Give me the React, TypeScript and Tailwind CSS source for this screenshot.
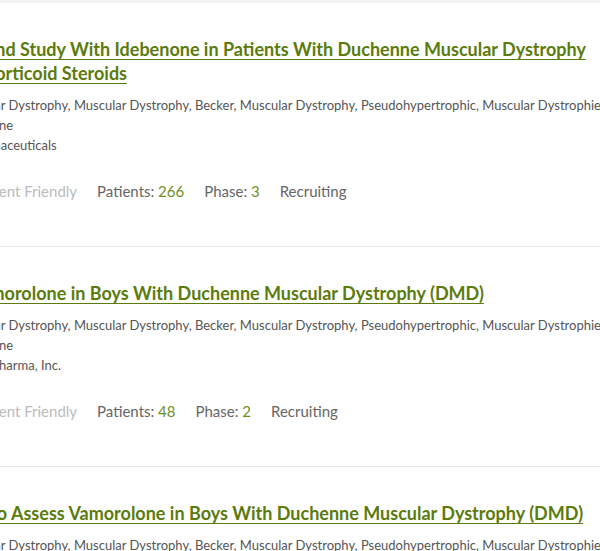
interface Trial {
  title: string;
  conditions: string;
  sponsor: string;
  patients: number;
  phase: number;
  status: string;
}

const conditions =
  "Condition: Duchenne Muscular Dystrophy, Muscular Dystrophy, Becker, Muscular Dystrophy, Pseudohypertrophic, Muscular Dystrophies, Muscular Dystrophy - Duchenne";

const trials: Trial[] = [
  {
    title:
      "A Phase III Double-blind Study With Idebenone in Patients With Duchenne Muscular Dystrophy (DMD), Taking Glucocorticoid Steroids",
    conditions,
    sponsor: "Lead sponsor: Santhera Pharmaceuticals",
    patients: 266,
    phase: 3,
    status: "Recruiting",
  },
  {
    title:
      "Phase 2b Study of Vamorolone in Boys With Duchenne Muscular Dystrophy (DMD)",
    conditions,
    sponsor: "Lead sponsor: Reveragen Biopharma, Inc.",
    patients: 48,
    phase: 2,
    status: "Recruiting",
  },
  {
    title:
      "The Extension Study to Assess Vamorolone in Boys With Duchenne Muscular Dystrophy (DMD)",
    conditions,
    sponsor: "Lead sponsor: Reveragen Biopharma, Inc.",
    patients: 48,
    phase: 2,
    status: "Recruiting",
  },
];

function TrialCard({ trial }: { trial: Trial }) {
  return (
    <div className="border-b border-[#e8e8e8] pt-[34px] pb-[44px]">
      <a
        href="#"
        className="block text-[18px] font-bold leading-6 text-[#5b7b0c] underline underline-offset-[3px] decoration-1"
      >
        {trial.title}
      </a>
      <div className="mt-[10px] ml-[6px] text-[13px] leading-5 text-[#555]">
        <p>{trial.conditions}</p>
        <p>{trial.sponsor}</p>
      </div>
      <div className="mt-[25px] flex gap-5 text-[15px] leading-[22px] text-[#666]">
        <span className="text-[#bbb]">Travel Reimbursable</span>
        <span className="text-[#bbb]">Patient Friendly</span>
        <span>
          Patients: <span className="text-[#6f8f1f]">{trial.patients}</span>
        </span>
        <span>
          Phase: <span className="text-[#6f8f1f]">{trial.phase}</span>
        </span>
        <span>{trial.status}</span>
      </div>
    </div>
  );
}

export default function App() {
  return (
    <div className="h-[551px] w-[600px] overflow-hidden bg-white font-['Lato',sans-serif]">
      <div className="h-[3px] bg-[#f2f2f2]" />
      <div className="-ml-[178px] w-[803px]">
        {trials.map((t, i) => (
          <TrialCard key={i} trial={t} />
        ))}
      </div>
    </div>
  );
}
